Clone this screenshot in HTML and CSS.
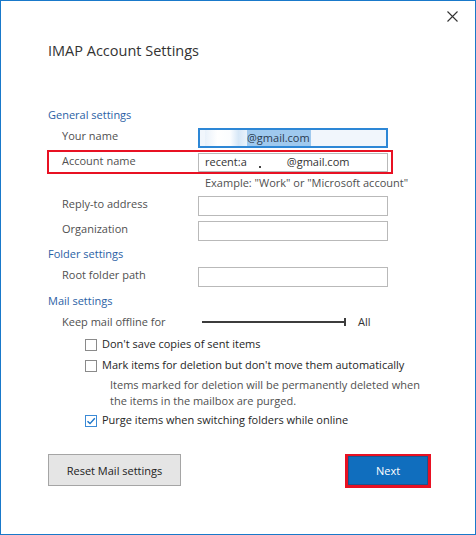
FILE: index.html
```html
<!DOCTYPE html>
<html>
<head>
<meta charset="utf-8">
<link rel="stylesheet" href="styles.css">
</head>
<body>
<div class="window">
  <div class="topbar">
    <button class="close" aria-label="Close">
      <svg width="11" height="11" viewBox="0 0 11 11"><path d="M0.5 0.5 L10.5 10.5 M10.5 0.5 L0.5 10.5" stroke="#333" stroke-width="1.1" fill="none"/></svg>
    </button>
  </div>
  <h1 class="title">IMAP Account Settings</h1>

  <div class="form">
    <div class="section s-general">General settings</div>
    <div class="row r-yourname">
      <label class="lbl">Your name</label>
      <div class="input focused"><span class="sel"><span class="redact"></span>@gmail.com</span></div>
    </div>
    <div class="row hl">
      <label class="lbl">Account name</label>
      <div class="input">recent:a<span class="gap"><span class="dot"></span></span>@gmail.com</div>
    </div>
    <div class="hint">Example: "Work" or "Microsoft account"</div>
    <div class="row r-reply">
      <label class="lbl">Reply-to address</label>
      <div class="input"></div>
    </div>
    <div class="row r-org">
      <label class="lbl">Organization</label>
      <div class="input"></div>
    </div>

    <div class="section s-folder">Folder settings</div>
    <div class="row r-root">
      <label class="lbl">Root folder path</label>
      <div class="input"></div>
    </div>

    <div class="section s-mail">Mail settings</div>
    <div class="row r-keep">
      <label class="lbl keep">Keep mail offline for</label>
      <div class="slider"><span class="track"></span><span class="tick"></span></div>
      <span class="all">All</span>
    </div>

    <div class="check c1"><span class="box"></span><span class="ctext">Don't save copies of sent items</span></div>
    <div class="check c2"><span class="box"></span><span class="ctext">Mark items for deletion but don't move them automatically</span></div>
    <div class="note">Items marked for deletion will be permanently deleted when<br>the items in the mailbox are purged.</div>
    <div class="check c3"><span class="box checked"><svg width="10" height="10" viewBox="0 0 10 10"><path d="M1.5 5.2 L4 7.6 L8.8 2.2" stroke="#1a73c7" stroke-width="1.4" fill="none"/></svg></span><span class="ctext">Purge items when switching folders while online</span></div>
  </div>

  <div class="buttons">
    <button class="btn reset">Reset Mail settings</button>
    <div class="next-hl"><button class="btn next">Next</button></div>
  </div>
</div>
</body>
</html>
```

FILE: styles.css
```css
* { box-sizing: border-box; }
html, body { margin: 0; padding: 0; background: #fff; }
body { font-family: "Open Sans", "Noto Sans", sans-serif; }

.window {
  width: 476px;
  height: 535px;
  border: 1px solid #1979ca;
  background: #fff;
  overflow: hidden;
}

.topbar {
  height: 39px;
  display: flex;
  justify-content: flex-end;
  padding: 10px 17px 0 0;
}
.close {
  width: 11px;
  height: 11px;
  padding: 0;
  border: 0;
  background: none;
  display: block;
}
.close svg { display: block; }

.title {
  margin: 0 0 0 47px;
  font-weight: 400;
  font-size: 14.5px;
  line-height: 21px;
  color: #333;
}

.form {
  padding-left: 47px;
  font-size: 11px;
  line-height: 16px;
}

.section { color: #2b5fa5; }
.s-general { margin-top: 46px; }
.s-folder { margin-top: 5px; }
.s-mail { margin-top: 6px; }

.row {
  display: flex;
  align-items: flex-start;
  padding-left: 14px;
}
.r-yourname { margin-top: 5px; }
.r-reply { margin-top: 5px; }
.r-org { margin-top: 5px; }
.r-root { margin-top: 5px; }

.lbl {
  width: 136px;
  flex: none;
  color: #505050;
}

.input {
  width: 190px;
  height: 20px;
  border: 1px solid #b9b9b9;
  padding: 0 6px;
  color: #333;
  white-space: nowrap;
  display: flex;
  align-items: flex-start;
  background: #fff;
}
.input.focused {
  border: 2px solid #2d87d6;
  background: #f1f6fc;
  padding: 0 0 0 5px;
  line-height: 16px;
}
.sel {
  display: flex;
  background: #9fc9ee;
  color: #2a3b50;
  padding-right: 1px;
}
.redact {
  width: 42px;
  height: 16px;
  background: linear-gradient(90deg, #e9f1fa 0, #fff 30%, #fbfdff 60%, #d6e7f7 80%, #eaf3fb 100%);
}
.gap {
  width: 40px;
  height: 16px;
  position: relative;
}
.dot {
  position: absolute;
  left: 12px;
  top: 12px;
  width: 2px;
  height: 2px;
  background: #444;
}

.row.hl {
  margin-top: 2px;
  margin-left: -1px;
  width: 346px;
  border: 2px solid #e81123;
  padding: 1px 3px 0 13px;
}
.row.hl .input { height: 19px; }

.hint {
  margin-top: 1px;
  padding-left: 157px;
  color: #505050;
}

.r-keep { margin-top: 5px; align-items: center; }
.lbl.keep { width: 140px; }
.slider {
  width: 144px;
  height: 8px;
  display: flex;
  align-items: center;
}
.track {
  flex: 1;
  height: 2px;
  background: #3c3c3c;
}
.tick {
  width: 2px;
  height: 8px;
  background: #3c3c3c;
}
.all {
  margin-left: 12px;
  color: #333;
}

.check {
  display: flex;
  align-items: flex-start;
  padding-left: 37px;
  color: #262626;
}
.c1 { margin-top: 6px; }
.c2 { margin-top: 5px; }
.c3 { margin-top: 3px; }
.box {
  width: 12px;
  height: 12px;
  margin-top: 3px;
  margin-right: 5px;
  border: 1px solid #8a8a8a;
  background: #fff;
  flex: none;
  display: flex;
  align-items: center;
  justify-content: center;
}
.box.checked { border-color: #3b8ad6; }
.box svg { display: block; }

.note {
  margin-top: 4px;
  padding-left: 62px;
  color: #505050;
}

.buttons {
  margin-top: 26px;
  display: flex;
  justify-content: space-between;
  align-items: flex-start;
  padding: 0 44px 0 47px;
}
.btn {
  font-family: "Open Sans", "Noto Sans", sans-serif;
  font-size: 11px;
  margin: 0;
}
.reset {
  width: 133px;
  height: 32px;
  background: #e5e5e5;
  border: 1px solid #a5a5a5;
  color: #222;
  padding: 0;
}
.next-hl {
  border: 3px solid #e81123;
  border-top-width: 2px;
}
.next {
  display: block;
  width: 80px;
  height: 29px;
  background: #106ebe;
  border: 1px solid #1a5590;
  color: #fff;
  padding: 0;
}
```
